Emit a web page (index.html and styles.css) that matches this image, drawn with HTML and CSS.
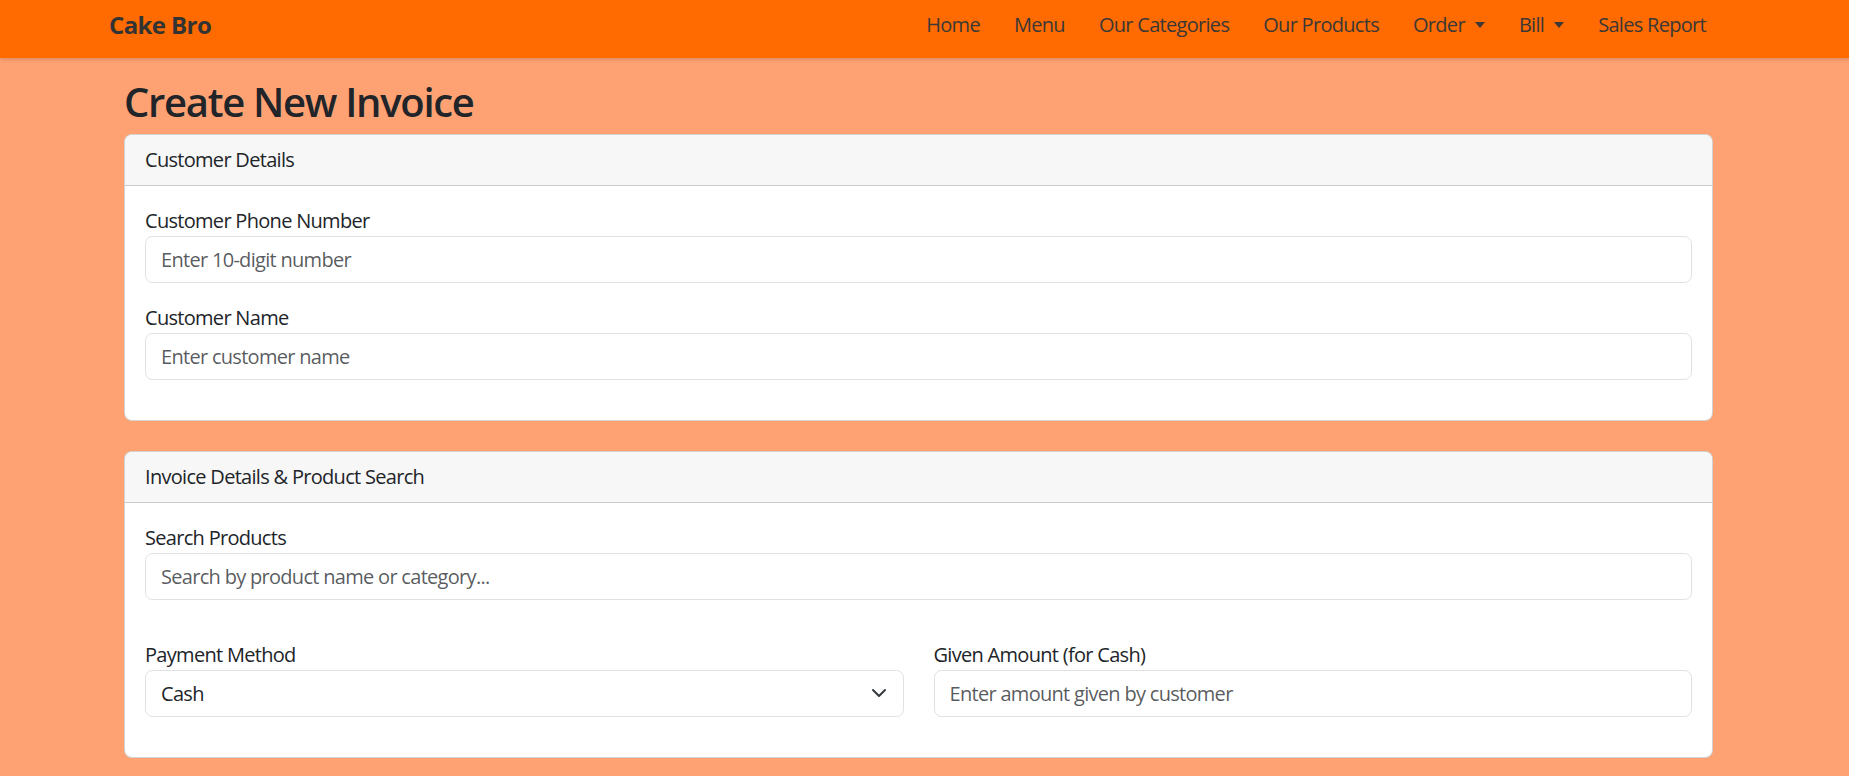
FILE: index.html
```html
<!DOCTYPE html>
<html lang="en">
<head>
<meta charset="utf-8">
<title>Create New Invoice - Cake Bro</title>
<link rel="stylesheet" href="styles.css">
</head>
<body>
<nav class="navbar">
  <a class="brand" href="#">Cake Bro</a>
  <ul class="nav-links">
    <li><a class="nav-link" href="#">Home</a></li>
    <li><a class="nav-link" href="#">Menu</a></li>
    <li><a class="nav-link" href="#">Our Categories</a></li>
    <li><a class="nav-link" href="#">Our Products</a></li>
    <li><a class="nav-link dropdown" href="#">Order<span class="caret"></span></a></li>
    <li><a class="nav-link dropdown" href="#">Bill<span class="caret"></span></a></li>
    <li><a class="nav-link" href="#">Sales Report</a></li>
  </ul>
</nav>

<main class="page">
  <h2 class="page-title">Create New Invoice</h2>

  <section class="card">
    <div class="card-header">Customer Details</div>
    <div class="card-body">
      <div class="field">
        <label class="field-label" for="phone">Customer Phone Number</label>
        <input class="field-input" id="phone" type="text" placeholder="Enter 10-digit number">
      </div>
      <div class="field">
        <label class="field-label" for="cname">Customer Name</label>
        <input class="field-input" id="cname" type="text" placeholder="Enter customer name">
      </div>
    </div>
  </section>

  <section class="card">
    <div class="card-header">Invoice Details &amp; Product Search</div>
    <div class="card-body">
      <div class="field">
        <label class="field-label" for="search">Search Products</label>
        <input class="field-input" id="search" type="text" placeholder="Search by product name or category...">
      </div>
      <div class="field-row">
        <div class="field">
          <label class="field-label" for="pay">Payment Method</label>
          <div class="select-wrap">
            <select class="field-input field-select" id="pay">
              <option>Cash</option>
              <option>Card</option>
              <option>UPI</option>
            </select>
            <svg class="select-chevron" width="16" height="16" viewBox="0 0 16 16" aria-hidden="true">
              <path d="M2 5l6 6 6-6" fill="none" stroke="#343a40" stroke-width="2" stroke-linecap="round" stroke-linejoin="round"/>
            </svg>
          </div>
        </div>
        <div class="field">
          <label class="field-label" for="given">Given Amount (for Cash)</label>
          <input class="field-input" id="given" type="text" placeholder="Enter amount given by customer">
        </div>
      </div>
    </div>
  </section>
</main>
</body>
</html>
```

FILE: styles.css
```css
* {
  box-sizing: border-box;
}

html, body {
  margin: 0;
  padding: 0;
}

body {
  background: #ffa273;
  color: #212529;
  font-family: "Open Sans", "Noto Sans", sans-serif;
  font-size: 20px;
  line-height: 30px;
  letter-spacing: -0.7px;
}

/* ---------- Navbar ---------- */
.navbar {
  height: 58px;
  background: #ff6b00;
  display: flex;
  align-items: flex-start;
  justify-content: space-between;
  padding: 10px 143px 0 109px;
  box-shadow: 0 2px 3px rgba(0, 0, 0, 0.12);
  position: relative;
  z-index: 1;
}

.brand {
  font-size: 24px;
  font-weight: 700;
  line-height: 30px;
  color: #333333;
  text-decoration: none;
  letter-spacing: -0.6px;
}

.nav-links {
  list-style: none;
  margin: 0;
  padding: 0;
  display: flex;
  gap: 34px;
}

.nav-link {
  display: flex;
  align-items: center;
  color: #3b3836;
  text-decoration: none;
  line-height: 30px;
}

.caret {
  display: inline-block;
  width: 0;
  height: 0;
  margin-left: 10px;
  border-top: 6px solid #3b3836;
  border-left: 5px solid transparent;
  border-right: 5px solid transparent;
}

/* ---------- Page ---------- */
.page {
  width: 1589px;
  margin-left: 124px;
}

.page-title {
  margin: 20px 0 8px 0;
  font-size: 40px;
  line-height: 48px;
  font-weight: 600;
  letter-spacing: -1.3px;
  color: #212529;
}

/* ---------- Cards ---------- */
.card {
  background: #ffffff;
  border: 1px solid rgba(0, 0, 0, 0.175);
  border-radius: 8px;
  margin-bottom: 30px;
  overflow: hidden;
}

.card-header {
  background: #f7f7f7;
  padding: 10px 20px;
  line-height: 30px;
  border-bottom: 1px solid rgba(0, 0, 0, 0.175);
}

.card-body {
  padding: 20px;
}

/* ---------- Form fields ---------- */
.field {
  margin-bottom: 20px;
}

.field-label {
  display: block;
  line-height: 30px;
}

.field-input {
  display: block;
  width: 100%;
  height: 47px;
  padding: 7.5px 15px;
  font-family: inherit;
  font-size: 20px;
  line-height: 30px;
  letter-spacing: -0.7px;
  color: #212529;
  background: #ffffff;
  border: 1px solid #dee2e6;
  border-radius: 7.5px;
  outline: none;
}

.field-input::placeholder {
  color: rgba(33, 37, 41, 0.75);
}

.field-row {
  padding-top: 20px;
  display: grid;
  grid-template-columns: 1fr 1fr;
  column-gap: 30px;
}

.select-wrap {
  position: relative;
}

.field-select {
  appearance: none;
  -webkit-appearance: none;
  padding-right: 56px;
}

.select-chevron {
  position: absolute;
  right: 17px;
  top: 15px;
  pointer-events: none;
}
```
